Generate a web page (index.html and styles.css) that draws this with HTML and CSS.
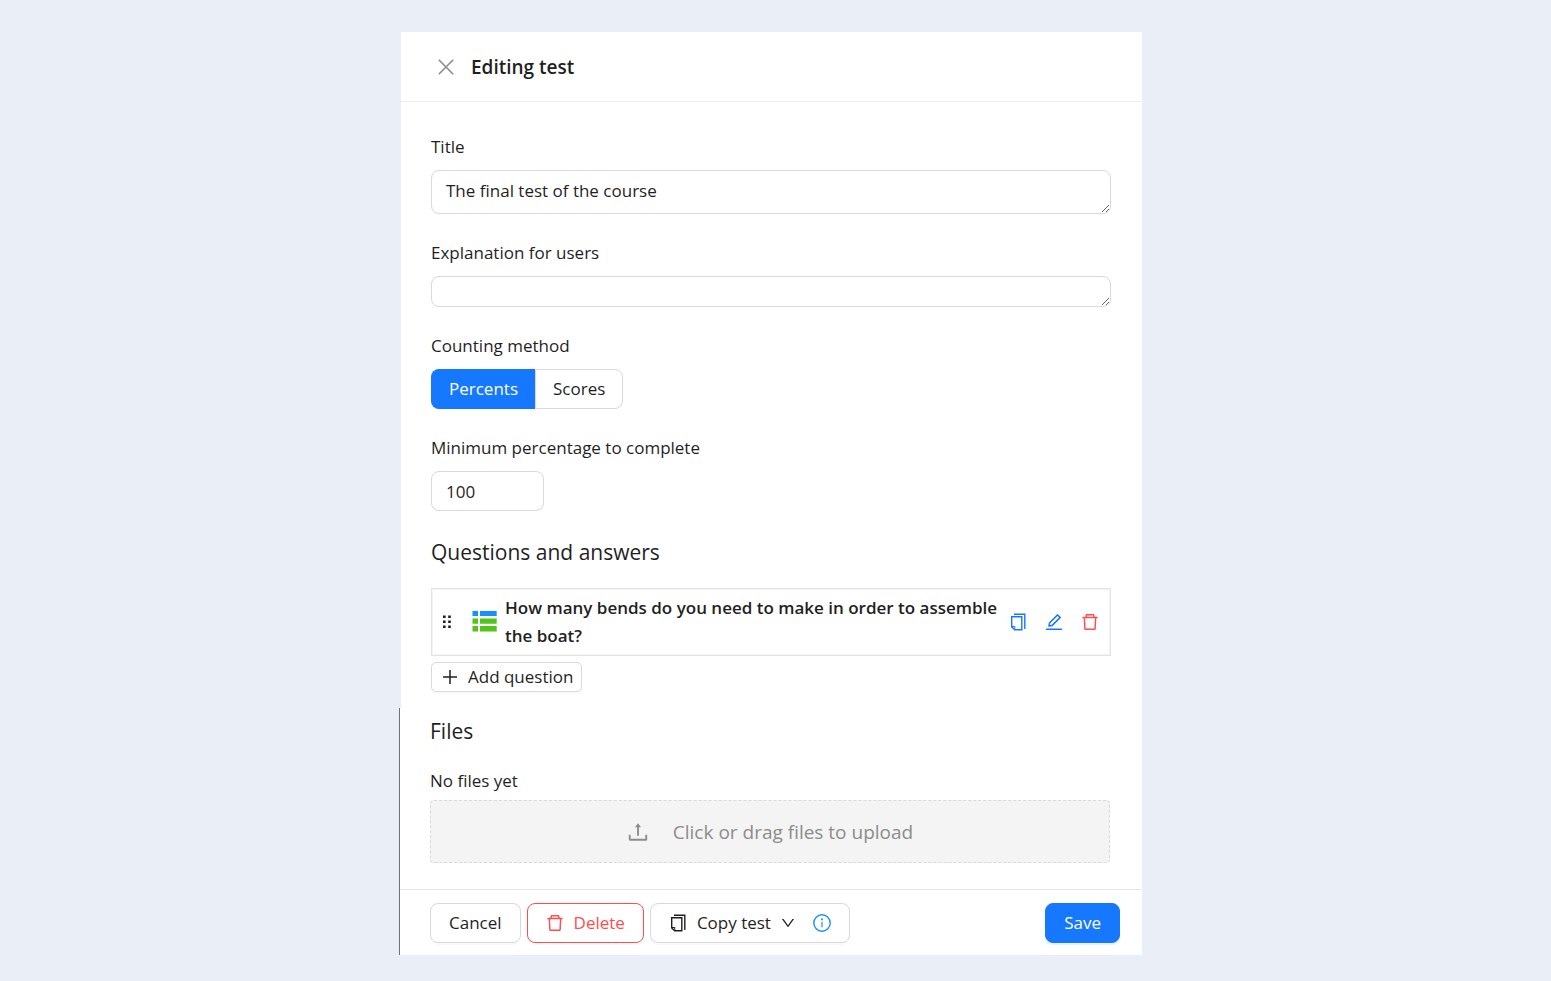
FILE: index.html
```
<!DOCTYPE html>
<html lang="en">
  <head>
    <meta charset="UTF-8">
    <meta name="viewport" content="width=device-width, initial-scale=1.0">
    <title>Editing test</title>
    <link rel="stylesheet" href="styles.css">
  </head>
  <body>
    <svg class="sprite" aria-hidden="true">
      <symbol id="icon-trash" viewBox="64 64 896 896">
        <path fill="currentColor" d="M360 184h304v72h72v-80c0-35.3-28.7-64-64-64H352c-35.3 0-64 28.7-64 64v80h72v-72zm504 72H160c-17.7 0-32 14.3-32 32v32c0 4.4 3.6 8 8 8h60.4l24.7 523c1.6 34.1 29.8 61 63.9 61h454c34.2 0 62.3-26.8 63.9-61l24.7-523H888c4.4 0 8-3.6 8-8v-32c0-17.7-14.3-32-32-32zM731.3 840H292.7l-24.2-512h487l-24.2 512z"/>
      </symbol>
      <symbol id="icon-copy" viewBox="0 0 18 18">
        <path fill="none" stroke="currentColor" stroke-width="1.4" d="M5 1.2H15.8V16M2.7 3.7H12.8V16.8H5.7L2.7 14Z"/>
        <path fill="none" stroke="currentColor" d="M2.7 13.5H5.8V16.8"/>
      </symbol>
    </svg>

    <form class="drawer">
      <header class="drawer__header">
        <button class="close" type="button" aria-label="Close">
          <svg width="16" height="16" viewBox="0 0 16 16"><path d="M.8.8L15.2 15.2M15.2.8L.8 15.2" fill="none" stroke="currentColor" stroke-width="1.6"/></svg>
        </button>
        <h1 class="drawer__title">Editing test</h1>
      </header>

      <main class="drawer__body">
        <div class="field">
          <label class="label" for="title">Title</label>
          <textarea class="input input--title" id="title" rows="1">The final test of the course</textarea>
        </div>
        <div class="field">
          <label class="label" for="explanation">Explanation for users</label>
          <textarea class="input input--explanation" id="explanation" rows="1"></textarea>
        </div>
        <div class="field" role="radiogroup" aria-labelledby="method">
          <span class="label" id="method">Counting method</span>
          <div class="switch">
            <label class="switch__item"><input type="radio" name="method" checked>Percents</label>
            <label class="switch__item"><input type="radio" name="method">Scores</label>
          </div>
        </div>
        <div class="field">
          <label class="label" for="minimum">Minimum percentage to complete</label>
          <input class="input input--number" id="minimum" type="text" inputmode="numeric" value="100">
        </div>

        <h2 class="heading">Questions and answers</h2>
        <div class="question">
          <svg class="question__drag" width="8" height="14" viewBox="0 0 8 14"><path fill="currentColor" d="M0 .5h2.6v2.6H0zM5.2.5h2.6v2.6H5.2zM0 5.5h2.6v2.6H0zM5.2 5.5h2.6v2.6H5.2zM0 10.5h2.6v2.6H0zM5.2 10.5h2.6v2.6H5.2z"/></svg>
          <svg class="question__type" width="25" height="22" viewBox="0 0 25 22">
            <path fill="#1890ff" d="M.5 0H6v5H.5zM8 0h16.7v5H8z"/>
            <path fill="#52c41a" d="M.5 7.5H6v5.2H.5zM8 7.5h16.7v5.2H8zM.5 15H6v5.5H.5zM8 15h16.7v5.5H8z"/>
          </svg>
          <p class="question__text">How many bends do you need to make in order to assemble the boat?</p>
          <div class="question__actions">
            <button class="action" type="button" aria-label="Copy question"><svg width="18" height="18"><use href="#icon-copy"/></svg></button>
            <button class="action" type="button" aria-label="Edit question">
              <svg width="18" height="18" viewBox="64 64 896 896"><path fill="currentColor" d="M257.7 752c2 0 4-.2 6-.5L431.9 722c2-.4 3.9-1.3 5.3-2.8l423.9-423.9a9.96 9.96 0 000-14.1L694.9 114.9c-1.9-1.9-4.4-2.9-7.1-2.9s-5.2 1-7.1 2.9L256.8 538.8c-1.5 1.5-2.4 3.3-2.8 5.3l-29.5 168.2a33.5 33.5 0 009.4 29.8c6.6 6.4 14.9 9.9 23.8 9.9zm67.4-174.4L687.8 215l73.3 73.3-362.7 362.6-88.9 15.7 15.6-89zM880 836H144c-17.7 0-32 14.3-32 32v36c0 4.4 3.6 8 8 8h784c4.4 0 8-3.6 8-8v-36c0-17.7-14.3-32-32-32z"/></svg>
            </button>
            <button class="action action--danger" type="button" aria-label="Delete question"><svg width="18" height="18"><use href="#icon-trash"/></svg></button>
          </div>
        </div>
        <button class="btn btn--small" type="button">
          <svg width="16" height="16" viewBox="0 0 16 16"><path d="M8 1v14M1 8h14" fill="none" stroke="currentColor" stroke-width="1.5"/></svg>
          Add question
        </button>
      </main>

      <div class="drawer__bottom">
        <section class="files">
          <h2 class="heading">Files</h2>
          <p class="files__empty">No files yet</p>
          <button class="upload" type="button">
            <svg width="22" height="22" viewBox="64 64 896 896"><path fill="currentColor" d="M400 317.7h73.9V656c0 4.4 3.6 8 8 8h60c4.4 0 8-3.6 8-8V317.7H624c6.7 0 10.4-7.7 6.3-12.9L518.3 163a8 8 0 00-12.6 0l-112 141.7c-4.1 5.3-.4 13 6.3 13zM878 626h-60c-4.4 0-8 3.6-8 8v154H214V634c0-4.4-3.6-8-8-8h-60c-4.4 0-8 3.6-8 8v198c0 17.7 14.3 32 32 32h684c17.7 0 32-14.3 32-32V634c0-4.4-3.6-8-8-8z"/></svg>
            Click or drag files to upload
          </button>
        </section>

        <footer class="drawer__footer">
          <button class="btn" type="button">Cancel</button>
          <button class="btn btn--danger" type="button">
            <svg width="18" height="18"><use href="#icon-trash"/></svg>
            Delete
          </button>
          <button class="btn" type="button">
            <svg width="18" height="18"><use href="#icon-copy"/></svg>
            Copy test
            <svg width="14" height="14" viewBox="64 64 896 896"><path fill="currentColor" d="M884 256h-75c-5.1 0-9.9 2.5-12.9 6.6L512 654.2 227.9 262.6c-3-4.1-7.8-6.6-12.9-6.6h-75c-6.5 0-10.3 7.4-6.5 12.7l352.6 486.1c12.8 17.6 39 17.6 51.7 0l352.6-486.1c3.9-5.3.1-12.7-6.4-12.7z"/></svg>
            <svg class="btn__info" width="18" height="18" viewBox="0 0 18 18"><circle cx="9" cy="9" r="8.2" fill="none" stroke="currentColor" stroke-width="1.4"/><path fill="currentColor" d="M8.1 4.5h1.8v1.8H8.1zM8.4 7.7h1.2v5.5H8.4z"/></svg>
          </button>
          <button class="btn btn--primary" type="submit">Save</button>
        </footer>
      </div>
    </form>
  </body>
</html>
```

FILE: styles.css
```
* {
  box-sizing: border-box;
}

body {
  margin: 0;
  padding: 32px 8px 26px 0;
  background: #e9eef7;
  color: #1f1f1f;
  font-family: 'Segoe UI', 'Open Sans', 'Noto Sans', sans-serif;
  font-size: 17px;
  line-height: 28px;
}

h1, h2, p {
  margin: 0;
}

button, input, textarea {
  color: inherit;
  font: inherit;
}

button {
  cursor: pointer;
}

svg {
  display: block;
  flex: none;
}

.sprite {
  position: absolute;
  width: 0;
  height: 0;
}

.drawer {
  max-width: 741px;
  margin: 0 auto;
  background: #fff;
}

.drawer__header {
  display: flex;
  align-items: center;
  gap: 17px;
  padding: 20px 37px 19px;
  border-bottom: 1px solid #f0f0f0;
}

.drawer__title {
  font-size: 19px;
  font-weight: 600;
  line-height: 30px;
}

.close {
  padding: 0;
  border: 0;
  background: none;
  color: #8c8c8c;
}

.drawer__body {
  padding: 31px 31px 16px 30px;
}

.field {
  display: flex;
  flex-direction: column;
  align-items: flex-start;
  gap: 9px;
  margin-bottom: 25px;
}

.input {
  width: 100%;
  padding: 6px 14px;
  border: 1px solid #d9d9d9;
  border-radius: 8px;
  background: #fff;
  outline: none;
  resize: vertical;
}

.input--title {
  height: 44px;
}

.input--explanation {
  height: 31px;
  padding: 0 14px;
}

.input--number {
  width: 113px;
  height: 40px;
}

.switch {
  display: flex;
}

.switch__item {
  padding: 5px 17px;
  border: 1px solid #d9d9d9;
  cursor: pointer;
}

.switch__item:first-child {
  border-right: 0;
  border-radius: 8px 0 0 8px;
}

.switch__item:last-child {
  border-radius: 0 8px 8px 0;
}

.switch__item:has(:checked) {
  border-color: #1677ff;
  background: #1677ff;
  color: #fff;
}

.switch__item input {
  position: absolute;
  opacity: 0;
  pointer-events: none;
}

.heading {
  margin-bottom: 20px;
  font-size: 21px;
  font-weight: 400;
  line-height: 32px;
}

.question {
  display: flex;
  align-items: center;
  margin-bottom: 6px;
  padding: 5px 11px;
  border: 1px solid #e4e4e4;
  box-shadow: inset 0 0 0 1px #f4f4f4;
}

.question__type {
  margin: 0 8px 0 21px;
}

.question__text {
  flex: 1;
  font-weight: 600;
}

.question__actions {
  display: flex;
  gap: 18px;
  margin-left: 4px;
}

.action {
  padding: 0;
  border: 0;
  background: none;
  color: #1677ff;
}

.action--danger {
  color: #ff4d4f;
}

.btn {
  display: flex;
  align-items: center;
  gap: 10px;
  height: 40px;
  padding: 0 18px;
  border: 1px solid #d9d9d9;
  border-radius: 8px;
  background: #fff;
  box-shadow: 0 2px 0 rgba(0, 0, 0, 0.02);
  white-space: nowrap;
}

.btn--small {
  height: 30px;
  padding: 0 8px 0 10px;
  border-radius: 5px;
}

.btn--danger {
  border-color: #ff4d4f;
  color: #ff4d4f;
}

.btn--primary {
  margin-left: auto;
  border-color: #1677ff;
  background: #1677ff;
  box-shadow: 0 2px 0 rgba(5, 145, 255, 0.1);
  color: #fff;
}

.btn__info {
  margin-left: 8px;
  color: #1890ff;
}

/* files and footer stick out a little to the left of the form */
.drawer__bottom {
  margin-left: -2px;
  border-left: 1px solid #6f7276;
  background: #fff;
}

.files {
  padding: 7px 32px 26px 30px;
}

.files__empty {
  margin-bottom: 5px;
}

.upload {
  display: flex;
  align-items: center;
  justify-content: center;
  gap: 24px;
  width: 100%;
  height: 63px;
  border: 1px dashed #d9d9d9;
  border-radius: 4px;
  background: #f4f4f4;
  color: #8c8c8c;
  font-size: 19px;
}

.drawer__footer {
  display: flex;
  flex-wrap: wrap;
  gap: 6px;
  padding: 13px 22px 12px 30px;
  border-top: 1px solid #e8e8e8;
}
```
